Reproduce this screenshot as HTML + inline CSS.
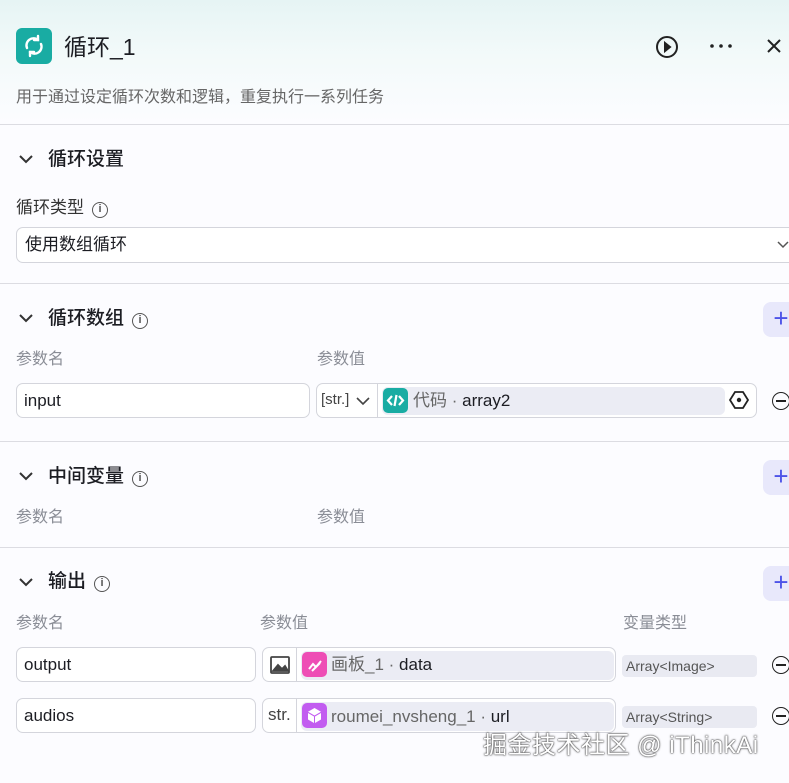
<!DOCTYPE html><html><head><meta charset="utf-8"><style>
*{box-sizing:border-box;margin:0;padding:0}
body{width:789px;height:783px;overflow:hidden;background:#fcfcff;font-family:"Liberation Sans","Noto Sans CJK SC",sans-serif;position:relative;color:#1c1d23}
.a{position:absolute}
.hdr{left:0;top:0;width:789px;height:124px;background:linear-gradient(180deg,#e6f4f4 0%,#f3fafa 45%,#fcfcff 100%)}
.hr{left:0;width:789px;height:1px;background:#dcdce2}
.st{font-size:19px;font-weight:500;color:#1c1d23;line-height:24px}
.lb{font-size:16px;color:#8a8d96;line-height:20px}
.box{border:1px solid #d4d5dc;border-radius:7px;background:#fff;height:35px}
.in{font-size:17px;color:#1c1d23;padding:7px 7px;line-height:20px}
.plus{width:30px;height:35px;background:#e8e8fb;border-radius:8px 0 0 8px;color:#4d53e8;font-size:26px;line-height:33px;text-align:center;padding-left:6px}
.info{display:inline-block;width:16px;height:16px;border:1.5px solid #555;border-radius:50%;font-size:11px;line-height:13px;text-align:center;color:#555;vertical-align:1px;margin-left:8px;font-weight:bold}
.minus{width:18px;height:18px;border:1.6px solid #222;border-radius:50%}
.minus:after{content:"";position:absolute;left:3px;right:3px;top:7px;height:1.6px;background:#222}
.tag{background:#e9eaf2;border-radius:4px;font-size:14px;color:#555;padding:3px 4px;height:22px;line-height:16px}
.ref{background:#ebecf4;border-radius:6px;font-size:17px}
.ic{width:25px;height:25px;border-radius:5px}
.rt{font-size:17px;color:#666;line-height:20px}
</style></head><body>
<div class="a hdr"></div>
<div class="a" style="left:16px;top:28px;width:36px;height:36px;border-radius:6px;background:#19aca3">
<svg width="36" height="36" viewBox="0 0 36 36" fill="none" stroke="#fff" stroke-width="2.4" stroke-linecap="round"><path d="M11 20a7 7 0 0 1 11-8M25 16a7 7 0 0 1-11 8"/><path d="M22 8v4h-4M14 28v-4h4"/></svg></div>
<div class="a" style="left:64px;top:33px;font-size:23px;line-height:28px">循环_1</div>
<svg class="a" style="left:655px;top:35px" width="24" height="24" viewBox="0 0 24 24" fill="none" stroke="#222" stroke-width="2"><circle cx="12" cy="12" r="10"/><path d="M10 8l5 4-5 4z" fill="#222"/></svg>
<svg class="a" style="left:709px;top:43px" width="24" height="6" viewBox="0 0 24 6" fill="#222"><circle cx="3" cy="3" r="1.8"/><circle cx="12" cy="3" r="1.8"/><circle cx="21" cy="3" r="1.8"/></svg>
<svg class="a" style="left:766px;top:38px" width="16" height="16" viewBox="0 0 16 16" stroke="#222" stroke-width="2"><path d="M2 2l12 12M14 2L2 14"/></svg>
<div class="a" style="left:16px;top:88px;font-size:16px;color:#666;line-height:20px">用于通过设定循环次数和逻辑，重复执行一系列任务</div>
<div class="a hr" style="top:124px"></div>

<svg class="a" style="left:18px;top:153px" width="16" height="12" viewBox="0 0 16 12" fill="none" stroke="#333" stroke-width="2"><path d="M2 3l6 6 6-6"/></svg>
<div class="a st" style="left:48px;top:148px">循环设置</div>
<div class="a" style="left:16px;top:197px;font-size:17px;color:#333;line-height:22px">循环类型<span class="info">i</span></div>
<div class="a box in" style="left:16px;top:227px;width:790px;height:36px;padding:7px 8px">使用数组循环</div>
<svg class="a" style="left:776px;top:240px" width="14" height="10" viewBox="0 0 14 10" fill="none" stroke="#555" stroke-width="1.5"><path d="M2 2l5 5 5-5"/></svg>
<div class="a hr" style="top:283px"></div>

<svg class="a" style="left:18px;top:312px" width="16" height="12" viewBox="0 0 16 12" fill="none" stroke="#333" stroke-width="2"><path d="M2 3l6 6 6-6"/></svg>
<div class="a st" style="left:48px;top:307px">循环数组<span class="info">i</span></div>
<div class="a plus" style="left:763px;top:302px">+</div>
<div class="a lb" style="left:16px;top:350px">参数名</div>
<div class="a lb" style="left:317px;top:350px">参数值</div>
<div class="a box in" style="left:16px;top:383px;width:294px">input</div>
<div class="a box" style="left:316px;top:383px;width:441px"></div>
<div class="a" style="left:321px;top:391px;font-size:15px;color:#444;line-height:18px">[str.]</div>
<svg class="a" style="left:355px;top:396px" width="16" height="10" viewBox="0 0 16 10" fill="none" stroke="#444" stroke-width="1.6"><path d="M2 2l6 6 6-6"/></svg>
<div class="a" style="left:377px;top:384px;width:1px;height:33px;background:#d4d5dc"></div>
<div class="a ref" style="left:382px;top:387px;width:343px;height:28px"></div>
<div class="a ic" style="left:383px;top:388px;background:#19aca3"><svg width="25" height="25" viewBox="0 0 25 25" fill="none" stroke="#fff" stroke-width="2.2"><path d="M9 8l-4 4.5 4 4.5M16 8l4 4.5-4 4.5M13.5 7l-2 11"/></svg></div>
<div class="a rt" style="left:413px;top:391px">代码 · <span style="color:#1c1d23">array2</span></div>
<svg class="a" style="left:728px;top:389px" width="22" height="22" viewBox="0 0 22 22" fill="none" stroke="#222" stroke-width="1.8"><path d="M7 3h8l5 8-5 8H7l-5-8z"/><circle cx="11" cy="11" r="1.3" fill="#222"/></svg>
<div class="a minus" style="left:772px;top:392px"></div>
<div class="a hr" style="top:441px"></div>

<svg class="a" style="left:18px;top:470px" width="16" height="12" viewBox="0 0 16 12" fill="none" stroke="#333" stroke-width="2"><path d="M2 3l6 6 6-6"/></svg>
<div class="a st" style="left:48px;top:465px">中间变量<span class="info">i</span></div>
<div class="a plus" style="left:763px;top:460px">+</div>
<div class="a lb" style="left:16px;top:508px">参数名</div>
<div class="a lb" style="left:317px;top:508px">参数值</div>
<div class="a hr" style="top:547px"></div>

<svg class="a" style="left:18px;top:576px" width="16" height="12" viewBox="0 0 16 12" fill="none" stroke="#333" stroke-width="2"><path d="M2 3l6 6 6-6"/></svg>
<div class="a st" style="left:48px;top:570px">输出<span class="info">i</span></div>
<div class="a plus" style="left:763px;top:566px">+</div>
<div class="a lb" style="left:16px;top:614px">参数名</div>
<div class="a lb" style="left:260px;top:614px">参数值</div>
<div class="a lb" style="left:623px;top:614px">变量类型</div>

<div class="a box in" style="left:16px;top:647px;width:240px">output</div>
<div class="a box" style="left:262px;top:647px;width:354px"></div>
<svg class="a" style="left:269px;top:655px" width="22" height="20" viewBox="0 0 22 20" fill="none" stroke="#444" stroke-width="1.8"><rect x="2" y="2" width="18" height="16" rx="1"/><path d="M4 16l5-6 4 4 3-3 3 5z" fill="#444"/></svg>
<div class="a" style="left:296px;top:648px;width:1px;height:33px;background:#d4d5dc"></div>
<div class="a ref" style="left:301px;top:651px;width:313px;height:29px"></div>
<div class="a ic" style="left:302px;top:652px;background:#ee4db5"><svg width="25" height="25" viewBox="0 0 25 25" fill="none" stroke="#fff" stroke-width="2"><path d="M7 17l4-5 3 3 5-6M10 19l8-8"/></svg></div>
<div class="a rt" style="left:331px;top:655px">画板_1 · <span style="color:#1c1d23">data</span></div>
<div class="a tag" style="left:622px;top:655px;width:135px">Array&lt;Image&gt;</div>
<div class="a minus" style="left:772px;top:656px"></div>

<div class="a box in" style="left:16px;top:698px;width:240px">audios</div>
<div class="a box" style="left:262px;top:698px;width:354px"></div>
<div class="a" style="left:268px;top:705px;font-size:17px;color:#444;line-height:20px">str.</div>
<div class="a" style="left:296px;top:699px;width:1px;height:33px;background:#d4d5dc"></div>
<div class="a ref" style="left:301px;top:702px;width:313px;height:29px"></div>
<div class="a ic" style="left:302px;top:703px;background:#c25cf0"><svg width="25" height="25" viewBox="0 0 25 25" fill="#fff"><path d="M12.5 5l6.5 3.7-6.5 3.8-6.5-3.8zM6 10l6 3.5V20l-6-3.5zM19 10l-6 3.5V20l6-3.5z"/></svg></div>
<div class="a rt" style="left:331px;top:707px">roumei_nvsheng_1 · <span style="color:#1c1d23">url</span></div>
<div class="a tag" style="left:622px;top:706px;width:135px">Array&lt;String&gt;</div>
<div class="a minus" style="left:772px;top:707px"></div>

<div class="a" style="left:483px;top:731px;font-size:24px;line-height:30px;color:#fff;text-shadow:0 0 2px #333,0 0 1px #000;letter-spacing:0.5px">掘金技术社区 @ iThinkAi</div>
</body></html>
